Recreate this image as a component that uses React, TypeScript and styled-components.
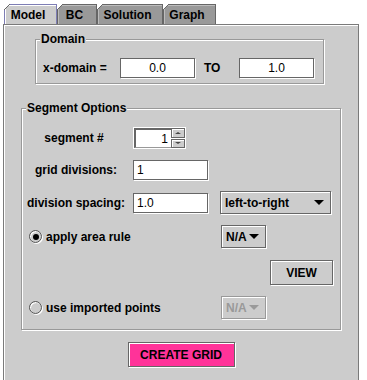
import React from "react";
import styled, { createGlobalStyle } from "styled-components";

const GlobalStyle = createGlobalStyle`
  html, body { margin: 0; padding: 0; background: #fff; }
  body { font-family: "Liberation Sans", Arial, sans-serif; font-size: 12px; color: #000; }
  * { box-sizing: border-box; }
`;

const Page = styled.div`
  width: 367px;
  height: 380px;
  overflow: hidden;
  padding: 4px 0 0 3px;
  background: #fff;
`;

const TabStrip = styled.div`
  display: flex;
  height: 20px;
  padding-left: 1px;
`;

const Tab = styled.div<{ $w: number; $selected?: boolean }>`
  position: relative;
  width: ${(p) => p.$w}px;
  height: 20px;
  padding-right: 5px;
  display: flex;
  align-items: center;
  justify-content: center;
  font-weight: bold;
  font-size: 12px;
  line-height: 14px;
  background: ${(p) => (p.$selected ? "#cccccc" : "#999999")};
  border: 1px solid ${(p) => (p.$selected ? "#7d7db4" : "#666666")};
  border-bottom: none;
  box-shadow: inset 1px 1px 0 ${(p) => (p.$selected ? "#ffffff" : "#bdbdbd")};
  &::before {
    content: "";
    position: absolute;
    left: -1px;
    top: -1px;
    width: 6px;
    height: 6px;
    background: linear-gradient(135deg, #fff 0 42%, #666 42% 58%, transparent 58%);
  }
`;

const Panel = styled.div`
  width: 356px;
  height: 360px;
  background: #cccccc;
  border: 1px solid #7a7a7a;
  box-shadow: inset 1px 1px 0 #fff;
  display: flex;
  flex-direction: column;
`;

const Group = styled.div<{ $left: number; $width: number; $top: number }>`
  position: relative;
  margin: ${(p) => p.$top}px 0 0 ${(p) => p.$left}px;
  width: ${(p) => p.$width}px;
  border: 1px solid #999999;
  box-shadow: inset 1px 1px 0 #fff, 1px 1px 0 #fff;
`;

const GroupTitle = styled.span`
  position: absolute;
  top: -8px;
  left: 4px;
  padding: 0 1px;
  background: #cccccc;
  font-weight: bold;
  font-size: 12px;
  line-height: 14px;
`;

const DomainRow = styled.div`
  display: grid;
  grid-template-columns: 77px 76px 43px 76px;
  align-items: center;
  height: 20px;
  margin: 18px 0 5px 7px;
`;

const Label = styled.span<{ $pad?: number }>`
  font-weight: bold;
  font-size: 12px;
  line-height: 14px;
  white-space: nowrap;
  padding-left: ${(p) => p.$pad ?? 0}px;
`;

const TextField = styled.div<{ $align?: string }>`
  width: 75px;
  height: 20px;
  background: #fff;
  border: 1px solid #666666;
  box-shadow: 1px 1px 0 #fff;
  padding: 0 3px;
  display: flex;
  align-items: center;
  justify-content: ${(p) => p.$align ?? "flex-start"};
  font-size: 12px;
  line-height: 14px;
`;

const SegmentBody = styled.div`
  display: flex;
  flex-direction: column;
  gap: 11px;
  padding: 18px 7px 10px 7px;
`;

const Row = styled.div<{ $h: number; $end?: boolean; $mt?: number }>`
  display: flex;
  align-items: center;
  height: ${(p) => p.$h}px;
  justify-content: ${(p) => (p.$end ? "flex-end" : "flex-start")};
  margin-top: ${(p) => p.$mt ?? 0}px;
`;

const LabelCell = styled.div<{ $shift?: number }>`
  width: 94px;
  margin-right: 10px;
  display: flex;
  justify-content: center;
  padding-right: ${(p) => p.$shift ?? 0}px;
`;

const SpinnerBox = styled.div`
  display: flex;
  width: 53px;
  height: 22px;
  border: 1px solid #fff;
  background: #fff;
`;

const SpinField = styled.div`
  flex: 1;
  border-top: 2px solid #666;
  border-left: 2px solid #666;
  border-bottom: 1px solid #999;
  background: #fff;
  display: flex;
  align-items: center;
  justify-content: flex-end;
  padding-right: 3px;
  font-size: 12px;
`;

const SpinButtons = styled.div`
  display: flex;
  flex-direction: column;
  width: 14px;
  gap: 1px;
  background: #fff;
`;

const SpinButton = styled.div<{ $down?: boolean }>`
  flex: 1;
  background: #cccccc;
  border: 1px solid #666;
  box-shadow: inset 1px 1px 0 #fff;
  display: flex;
  align-items: center;
  justify-content: center;
  &::after {
    content: "";
    border-left: 3px solid transparent;
    border-right: 3px solid transparent;
    ${(p) => (p.$down ? "border-top: 2px solid #444;" : "border-bottom: 2px solid #444;")}
  }
`;

const Combo = styled.div<{ $w: number; $disabled?: boolean }>`
  width: ${(p) => p.$w}px;
  height: 23px;
  margin-left: 12px;
  background: #cccccc;
  border: 1px solid ${(p) => (p.$disabled ? "#999" : "#666")};
  box-shadow: inset 1px 1px 0 #fff, 1px 1px 0 #fff;
  display: flex;
  align-items: center;
  justify-content: space-between;
  padding: 0 6px 0 4px;
  font-weight: bold;
  font-size: 12px;
  color: ${(p) => (p.$disabled ? "#999" : "#000")};
`;

const Arrow = styled.span<{ $disabled?: boolean }>`
  border-left: 5px solid transparent;
  border-right: 5px solid transparent;
  border-top: 5px solid ${(p) => (p.$disabled ? "#999" : "#000")};
`;

const RadioLabel = styled.div`
  width: 180px;
  display: flex;
  align-items: center;
  gap: 4px;
  font-weight: bold;
  font-size: 12px;
`;

const RadioCircle = styled.span<{ $on?: boolean }>`
  width: 13px;
  height: 13px;
  border-radius: 50%;
  border: 1px solid #555;
  background: #cccccc;
  box-shadow: 1px 1px 0 #fff, inset 1px 1px 0 #fff;
  display: flex;
  align-items: center;
  justify-content: center;
  &::after {
    content: "";
    width: 6px;
    height: 6px;
    border-radius: 50%;
    background: ${(p) => (p.$on ? "#000" : "transparent")};
  }
`;

const Button = styled.div<{ $w: number; $bg: string }>`
  width: ${(p) => p.$w}px;
  height: 25px;
  background: ${(p) => p.$bg};
  border: 1px solid #666;
  box-shadow: inset 1px 1px 0 #fff, 1px 1px 0 #fff;
  display: flex;
  align-items: center;
  justify-content: center;
  font-weight: bold;
  font-size: 12px;
`;

const CreateRow = styled.div`
  display: flex;
  justify-content: center;
  margin-top: 12px;
`;

export default function App() {
  return (
    <>
      <GlobalStyle />
      <Page>
        <TabStrip>
          <Tab $w={53} $selected>Model</Tab>
          <Tab $w={40}>BC</Tab>
          <Tab $w={66}>Solution</Tab>
          <Tab $w={53}>Graph</Tab>
        </TabStrip>
        <Panel>
          <Group $left={31} $width={289} $top={14}>
            <GroupTitle>Domain</GroupTitle>
            <DomainRow>
              <Label>x-domain =</Label>
              <TextField $align="center">0.0</TextField>
              <Label $pad={8}>TO</Label>
              <TextField $align="center">1.0</TextField>
            </DomainRow>
          </Group>

          <Group $left={17} $width={320} $top={24}>
            <GroupTitle>Segment Options</GroupTitle>
            <SegmentBody>
              <Row $h={22}>
                <LabelCell $shift={4}>
                  <Label>segment #</Label>
                </LabelCell>
                <SpinnerBox>
                  <SpinField>1</SpinField>
                  <SpinButtons>
                    <SpinButton />
                    <SpinButton $down />
                  </SpinButtons>
                </SpinnerBox>
              </Row>
              <Row $h={20}>
                <LabelCell>
                  <Label>grid divisions:</Label>
                </LabelCell>
                <TextField>1</TextField>
              </Row>
              <Row $h={23}>
                <LabelCell>
                  <Label>division spacing:</Label>
                </LabelCell>
                <TextField>1.0</TextField>
                <Combo $w={111}>
                  left-to-right
                  <Arrow />
                </Combo>
              </Row>
              <Row $h={23}>
                <RadioLabel>
                  <RadioCircle $on />
                  apply area rule
                </RadioLabel>
                <Combo $w={45}>
                  N/A
                  <Arrow />
                </Combo>
              </Row>
              <Row $h={25} $end $mt={1}>
                <Button $w={63} $bg="#cccccc">VIEW</Button>
              </Row>
              <Row $h={23}>
                <RadioLabel>
                  <RadioCircle />
                  use imported points
                </RadioLabel>
                <Combo $w={45} $disabled>
                  N/A
                  <Arrow $disabled />
                </Combo>
              </Row>
            </SegmentBody>
          </Group>

          <CreateRow>
            <Button $w={107} $bg="#ff3399">CREATE GRID</Button>
          </CreateRow>
        </Panel>
      </Page>
    </>
  );
}
